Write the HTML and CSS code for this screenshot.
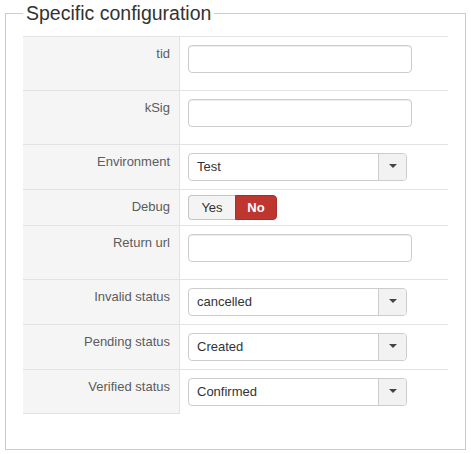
FILE: index.html
```html
<!DOCTYPE html>
<html lang="en">
<head>
<meta charset="utf-8">
<title>Specific configuration</title>
<link rel="stylesheet" href="styles.css">
</head>
<body>
<fieldset class="config">
  <legend class="config-title">Specific configuration</legend>
  <div class="form-table">
    <div class="row row-input">
      <div class="cell-label">tid</div>
      <div class="cell-value"><input class="text-input" type="text"></div>
    </div>
    <div class="row row-input">
      <div class="cell-label">kSig</div>
      <div class="cell-value"><input class="text-input" type="text"></div>
    </div>
    <div class="row">
      <div class="cell-label">Environment</div>
      <div class="cell-value">
        <div class="select"><span class="select-text">Test</span><span class="select-btn"><span class="caret"></span></span></div>
      </div>
    </div>
    <div class="row row-toggle">
      <div class="cell-label">Debug</div>
      <div class="cell-value">
        <div class="btn-group"><button class="btn btn-yes" type="button">Yes</button><button class="btn btn-no" type="button">No</button></div>
      </div>
    </div>
    <div class="row row-input">
      <div class="cell-label">Return url</div>
      <div class="cell-value"><input class="text-input" type="text"></div>
    </div>
    <div class="row">
      <div class="cell-label">Invalid status</div>
      <div class="cell-value">
        <div class="select"><span class="select-text">cancelled</span><span class="select-btn"><span class="caret"></span></span></div>
      </div>
    </div>
    <div class="row">
      <div class="cell-label">Pending status</div>
      <div class="cell-value">
        <div class="select"><span class="select-text">Created</span><span class="select-btn"><span class="caret"></span></span></div>
      </div>
    </div>
    <div class="row row-last">
      <div class="cell-label">Verified status</div>
      <div class="cell-value">
        <div class="select"><span class="select-text">Confirmed</span><span class="select-btn"><span class="caret"></span></span></div>
      </div>
    </div>
  </div>
</fieldset>
</body>
</html>
```

FILE: styles.css
```css
html, body {
  margin: 0;
  padding: 0;
  background: #fff;
}

body {
  font-family: "Liberation Sans", Arial, sans-serif;
  font-size: 13px;
  line-height: 18px;
  color: #333;
}

.config {
  margin: 1px 5px 0 5px;
  padding: 11px 17px 35px 17px;
  border: 1px solid #ccc;
  min-width: 0;
}

.config-title {
  padding: 0 3px;
  margin: 0;
  font-size: 19.5px;
  line-height: 24px;
  color: #333;
  font-weight: normal;
}

.form-table {
  display: flex;
  flex-direction: column;
}

.row {
  display: grid;
  grid-template-columns: 157px 1fr;
  border-top: 1px solid #e3e3e3;
}

.cell-label {
  box-sizing: border-box;
  background: #f5f5f5;
  border-right: 1px solid #e3e3e3;
  padding: 8px 9px 8px 8px;
  text-align: right;
  color: #5c5c5c;
}

.row-last .cell-label {
  border-bottom: 1px solid #e3e3e3;
}

.cell-value {
  padding: 8px;
}

.row-toggle .cell-value {
  padding: 5px 8px;
}

.text-input {
  display: block;
  box-sizing: border-box;
  width: 224px;
  height: 28px;
  margin: 0 0 9px 0;
  padding: 4px 8px;
  border: 1px solid #ccc;
  border-radius: 4px;
  box-shadow: inset 0 1px 1px rgba(0, 0, 0, 0.075);
  font: inherit;
  background: #fff;
}

.select {
  box-sizing: border-box;
  width: 219px;
  height: 28px;
  display: flex;
  border: 1px solid #ccc;
  border-radius: 4px;
  background: #fff;
  overflow: hidden;
}

.select-text {
  flex: 1;
  padding: 0 8px;
  line-height: 26px;
  color: #333;
}

.select-btn {
  width: 27px;
  border-left: 1px solid #ccc;
  background: #f2f2f2;
  display: flex;
  align-items: center;
  justify-content: center;
}

.caret {
  width: 0;
  height: 0;
  border-left: 4px solid transparent;
  border-right: 4px solid transparent;
  border-top: 4px solid #444;
  margin-top: -2px;
}

.btn-group {
  display: flex;
}

.btn {
  box-sizing: border-box;
  height: 25px;
  margin: 0;
  padding: 0;
  font-family: inherit;
  font-size: 13px;
  line-height: 23px;
  cursor: pointer;
}

.btn-yes {
  width: 47px;
  background: #f4f4f4;
  color: #333;
  border: 1px solid #c5c5c5;
  border-right: 0;
  border-radius: 4px 0 0 4px;
}

.btn-no {
  width: 42px;
  background: #bd362f;
  color: #fff;
  font-weight: bold;
  border: 1px solid #a8302a;
  border-radius: 0 4px 4px 0;
}
```
